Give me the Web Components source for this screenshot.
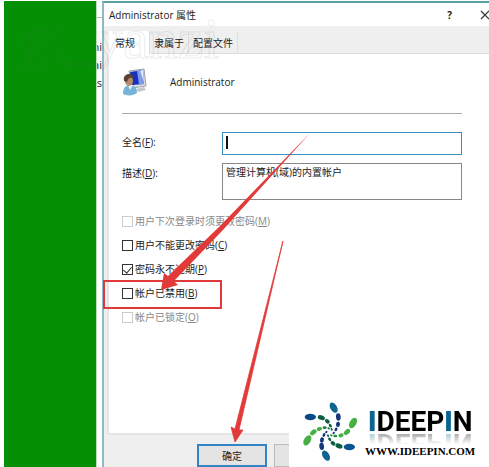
<!DOCTYPE html>
<html lang="zh-CN">
<head>
<meta charset="utf-8">
<title>Administrator 属性</title>
<style>
  body{
    margin: 0;
    height: 100vh;
    overflow: hidden;
    position: relative;
    background: white;
    color: #222;
    font: 10px/14px "Open Sans", "Noto Sans CJK SC", sans-serif;
  }
</style>
</head>
<body>
<desktop-view>
  <user-dialog heading="Administrator 属性">
    <tab-strip slot="tabs"></tab-strip>
    <user-header name="Administrator"></user-header>
    <text-field label="全名" key="F" focused></text-field>
    <text-field label="描述" key="D" value="管理计算机(域)的内置帐户" multiline></text-field>
    <check-list>
      <check-option label="用户下次登录时须更改密码" key="M" disabled></check-option>
      <check-option label="用户不能更改密码" key="C"></check-option>
      <check-option label="密码永不过期" key="P" checked></check-option>
      <check-option label="帐户已禁用" key="B"></check-option>
      <check-option label="帐户已锁定" key="O" disabled></check-option>
    </check-list>
    <dialog-button slot="buttons" label="确定" primary></dialog-button>
    <dialog-button slot="buttons" label=""></dialog-button>
  </user-dialog>
</desktop-view>
<water-mark>gt_yanzi</water-mark>
<red-marks></red-marks>
<site-brand></site-brand>

<script>
function define(name, html, setup) {
  const template = document.createElement("template");
  template.innerHTML = "<style>*, :host{box-sizing:border-box}</style>" + html;
  customElements.define(name, class extends HTMLElement {
    constructor() {
      super();
      this.attachShadow({ mode: "open" });
      this.shadowRoot.appendChild(template.content.cloneNode(true));
      if (setup) setup(this, this.shadowRoot);
    }
  });
}

// green desktop with the edge of a list window beside the dialog
define("desktop-view", `
<style>
  :host{
    display: flex;
    height: 100%;
    padding: 1px 0 0 4px;
  }
  .wall{
    flex: 0 0 92px;
    background: #048f04;
  }
  .list{
    flex: 0 0 6px;
    overflow: hidden;
    padding-top: 16px;
    border-left: 1px solid #b9dcb9;
    font-size: 11px;
    line-height: 18px;
  }
  .list div{
    border-top: 1px solid #bbb;
    padding-top: 20px;
  }
  .list span{
    display: block;
    direction: rtl;
    white-space: nowrap;
  }
  slot{
    display: flex;
    flex: 1;
    min-width: 0;
  }
</style>
<div class="wall"></div>
<div class="list"><div><span>ni</span><span>ai</span><span>s</span></div></div>
<slot></slot>
`);

define("user-dialog", `
<style>
  :host{
    display: flex;
    flex-direction: column;
    flex: 1;
    min-width: 0;
    border-top: 2px solid #5a9fa6;
    border-left: 2px solid #8fb9c2;
    background: #efefef;
  }
  header{
    display: flex;
    align-items: center;
    height: 23px;
    padding-left: 5px;
    background: white;
  }
  h1{
    flex: 1;
    margin: 0;
    font-size: 10px;
    font-weight: normal;
  }
  header button{
    padding: 0;
    border: 0;
    background: none;
    color: #222;
    font: bold 10px/14px "Open Sans", sans-serif;
  }
  header svg{
    display: block;
    margin-left: 28px;
  }
  main{
    flex: 1;
    margin-left: 3px;
    padding: 14px 27px 0 13px;
    border: 2px solid #e6e4e8;
    border-top: 1px solid #ddd;
    border-right: 0;
    background: white;
  }
  footer{
    display: flex;
    gap: 7px;
    height: 32px;
    padding: 9px 0 0 93px;
  }
</style>
<header>
  <h1></h1>
  <button aria-label="帮助">?</button>
  <button aria-label="关闭"><svg width="9" height="10" viewBox="0 0 9 10"><path d="M1 1l8 8M9 1l-8 8" stroke="#333" stroke-width="1.2"/></svg></button>
</header>
<slot name="tabs"></slot>
<main><slot></slot></main>
<footer><slot name="buttons"></slot></footer>
`, (el, root) => {
  root.querySelector("h1").textContent = el.getAttribute("heading");
});

define("tab-strip", `
<style>
  :host{
    display: flex;
    align-items: flex-end;
    height: 27px;
    padding-left: 5px;
  }
  button{
    height: 20px;
    padding: 0 4px;
    border: 0;
    border-right: 1px solid #ddd;
    background: none;
    color: #222;
    font: inherit;
  }
  .active{
    position: relative;
    height: 23px;
    margin-bottom: -1px;
    padding: 0 14px 0 6px;
    background: white;
  }
</style>
<button class="active">常规</button><button>隶属于</button><button>配置文件</button>
`);

define("user-header", `
<style>
  :host{
    display: flex;
    align-items: center;
    gap: 22px;
    height: 46px;
    margin-bottom: 18px;
    padding-bottom: 18px;
    border-bottom: 1px solid #aaa;
  }
</style>
<svg width="26" height="28" viewBox="0 0 26 28">
  <path d="M7 3l15-2 2 17-14 2z" fill="#d9dde2" stroke="#9aa3ad"/>
  <path d="M8 4l13-2 1 14-12 1z" fill="#1732b8"/>
  <path d="M15 3l6-1 1 14-5 .5z" fill="#7f9ae8"/>
  <path d="M18 3l3-1 1 12z" fill="#dce6ff"/>
  <path d="M14 21l8-2 2 3-8 2z" fill="#c3c8ce"/>
  <path d="M1 26c0-7 3-9 7-9s7 3 7 8c-4 3-10 3-14 1z" fill="#78b4d8"/>
  <path d="M6 17l2 5 3-5z" fill="#eaf5fb"/>
  <ellipse cx="7" cy="13" rx="4" ry="5" fill="#b98a68"/>
  <path d="M2 13c-1-5 2-7 5-7 3 0 5 2 4 4-3-1-5 0-6 4z" fill="#5b4232"/>
</svg>
<span></span>
`, (el, root) => {
  root.querySelector("span").textContent = el.getAttribute("name");
});

define("text-field", `
<style>
  :host{
    display: flex;
    margin-bottom: 8px;
  }
  label{
    flex: 0 0 100px;
    padding-top: 3px;
  }
  input, textarea{
    flex: 1;
    min-width: 0;
    height: 23px;
    margin: 0;
    padding: 1px 3px;
    border: 1px solid #888;
    outline: 0;
    resize: none;
    background: white;
    color: #222;
    font: inherit;
  }
  textarea{
    height: 37px;
  }
  :host([focused]) input{
    border-color: #3d8fc0;
    background: linear-gradient(#111, #111) 3px 3px / 2px 13px no-repeat white;
  }
</style>
<label for="box"><span></span>(<u></u>):</label>
`, (el, root) => {
  root.querySelector("span").textContent = el.getAttribute("label");
  root.querySelector("u").textContent = el.getAttribute("key");
  const box = document.createElement(el.hasAttribute("multiline") ? "textarea" : "input");
  box.id = "box";
  box.value = el.getAttribute("value") || "";
  root.appendChild(box);
});

define("check-list", `
<style>
  :host{
    display: block;
    padding-top: 1px;
  }
</style>
<slot></slot>
`);

define("check-option", `
<style>
  :host{
    display: flex;
    align-items: center;
    gap: 2px;
    height: 24px;
  }
  :host([disabled]){
    color: #888;
  }
  input{
    appearance: none;
    width: 11px;
    height: 11px;
    margin: 0;
    border: 1px solid #333;
    background: white;
  }
  input:disabled{
    border-color: #ccc;
  }
  /* tick */
  input:checked::after{
    content: "";
    display: block;
    width: 4px;
    height: 7px;
    margin: 0 auto;
    border: solid #333;
    border-width: 0 1px 1px 0;
    transform: rotate(40deg);
  }
</style>
<input type="checkbox" id="box">
<label for="box"><span></span>(<u></u>)</label>
`, (el, root) => {
  root.querySelector("span").textContent = el.getAttribute("label");
  root.querySelector("u").textContent = el.getAttribute("key");
  root.querySelector("input").checked = el.hasAttribute("checked");
  root.querySelector("input").disabled = el.hasAttribute("disabled");
});

define("dialog-button", `
<style>
  :host{
    display: block;
  }
  button{
    width: 70px;
    height: 23px;
    padding: 0;
    border: 1px solid #bbb;
    background: #e4e4e4;
    color: #222;
    font: inherit;
  }
  :host([primary]) button{
    border: 2px solid #3584c4;
  }
</style>
<button></button>
`, (el, root) => {
  root.querySelector("button").textContent = el.getAttribute("label");
});

define("water-mark", `
<style>
  :host{
    position: absolute;
    left: 20px;
    top: 9px;
    pointer-events: none;
    color: transparent;
    -webkit-text-stroke: 1px rgba(110, 110, 110, 0.13);
    font: 58px/60px "Liberation Serif", serif;
  }
</style>
<slot></slot>
`);

// box and arrows drawn over the dialog
define("red-marks", `
<style>
  :host{
    position: absolute;
    left: 0;
    top: 0;
    pointer-events: none;
  }
  svg{
    display: block;
  }
</style>
<svg width="320" height="450" viewBox="0 0 320 450" fill="#e23a38">
  <rect x="104" y="281" width="117" height="27" fill="none" stroke="#e0393a" stroke-width="2"/>
  <path d="M311 132L222 231L174 281L178 285L161 290L164 273L168 276L219 227Z"/>
  <path d="M283 241L239 430L243 430L235 442L231 427L235 429Z" stroke="#e23a38" stroke-width="0.8"/>
</svg>
`);

define("site-brand", `
<style>
  :host{
    position: absolute;
    right: 0;
    bottom: 0;
    display: flex;
    width: 200px;
    height: 72px;
    padding-left: 6px;
    background: white;
  }
  svg{
    flex: none;
  }
  .words{
    display: flex;
    flex-direction: column;
    margin-left: -5px;
    padding-top: 12px;
    color: black;
  }
  .name{
    height: 30px;
    padding-left: 3px;
    font: bold 28px/30px Roboto, sans-serif;
    -webkit-box-reflect: below -9px linear-gradient(transparent 45%, rgba(0, 0, 0, 0.35) 82%);
  }
  b{
    color: #0b6590;
  }
  a{
    margin-top: 7px;
    color: black;
    text-decoration: none;
    font: bold 11px/14px "Liberation Serif", serif;
  }
</style>
<svg width="75" height="72" viewBox="0 0 225 216"></svg>
<div class="words">
  <div class="name"><b>I</b>DEEP<b>I</b>N</div>
  <a href="#">WWW.IDEEPIN.COM</a>
</div>
`, (el, root) => {
  // each arm goes from its outer dot to the middle: x, y, angle
  const arms = [
    ["#0d6590", "#15357c", [[116, 38, 60], [130, 66, 85], [129, 88, 100], [123, 103, 115], [116, 114, 130]]],
    ["#0a4a86", "#0b6044", [[46, 66, 0], [79, 68, 20], [97, 79, 40], [106, 92, 55], [110, 103, 70]]],
    ["#46b044", "#168040", [[37, 136, 120], [55, 112, 140], [73, 102, 165], [89, 98, 0], [101, 100, 20]]],
    ["#0d6590", "#15357c", [[93, 182, 60], [80, 154, 85], [81, 135, 100], [87, 120, 115], [94, 111, 130]]],
    ["#0a5590", "#0b6044", [[163, 156, 0], [132, 153, 20], [114, 145, 40], [104, 133, 55], [99, 122, 70]]],
    ["#46b044", "#219040", [[174, 84, 120], [156, 111, 140], [138, 121, 165], [121, 123, 0], [109, 121, 20]]]
  ];
  const sizes = [[17, 10], [11, 7], [8, 6], [6, 4], [4, 3]];
  let dots = "";
  for (const [outer, inner, points] of arms) {
    points.forEach(([x, y, angle], i) => {
      const green = outer === "#46b044" && i < 3;
      dots += `<ellipse cx="${x}" cy="${y}" rx="${sizes[i][0]}" ry="${sizes[i][1]}" fill="${i === 0 || green ? outer : inner}" transform="rotate(${angle} ${x} ${y})"/>`;
    });
  }
  root.querySelector("svg").innerHTML = dots;
});
</script>
</body>
</html>
